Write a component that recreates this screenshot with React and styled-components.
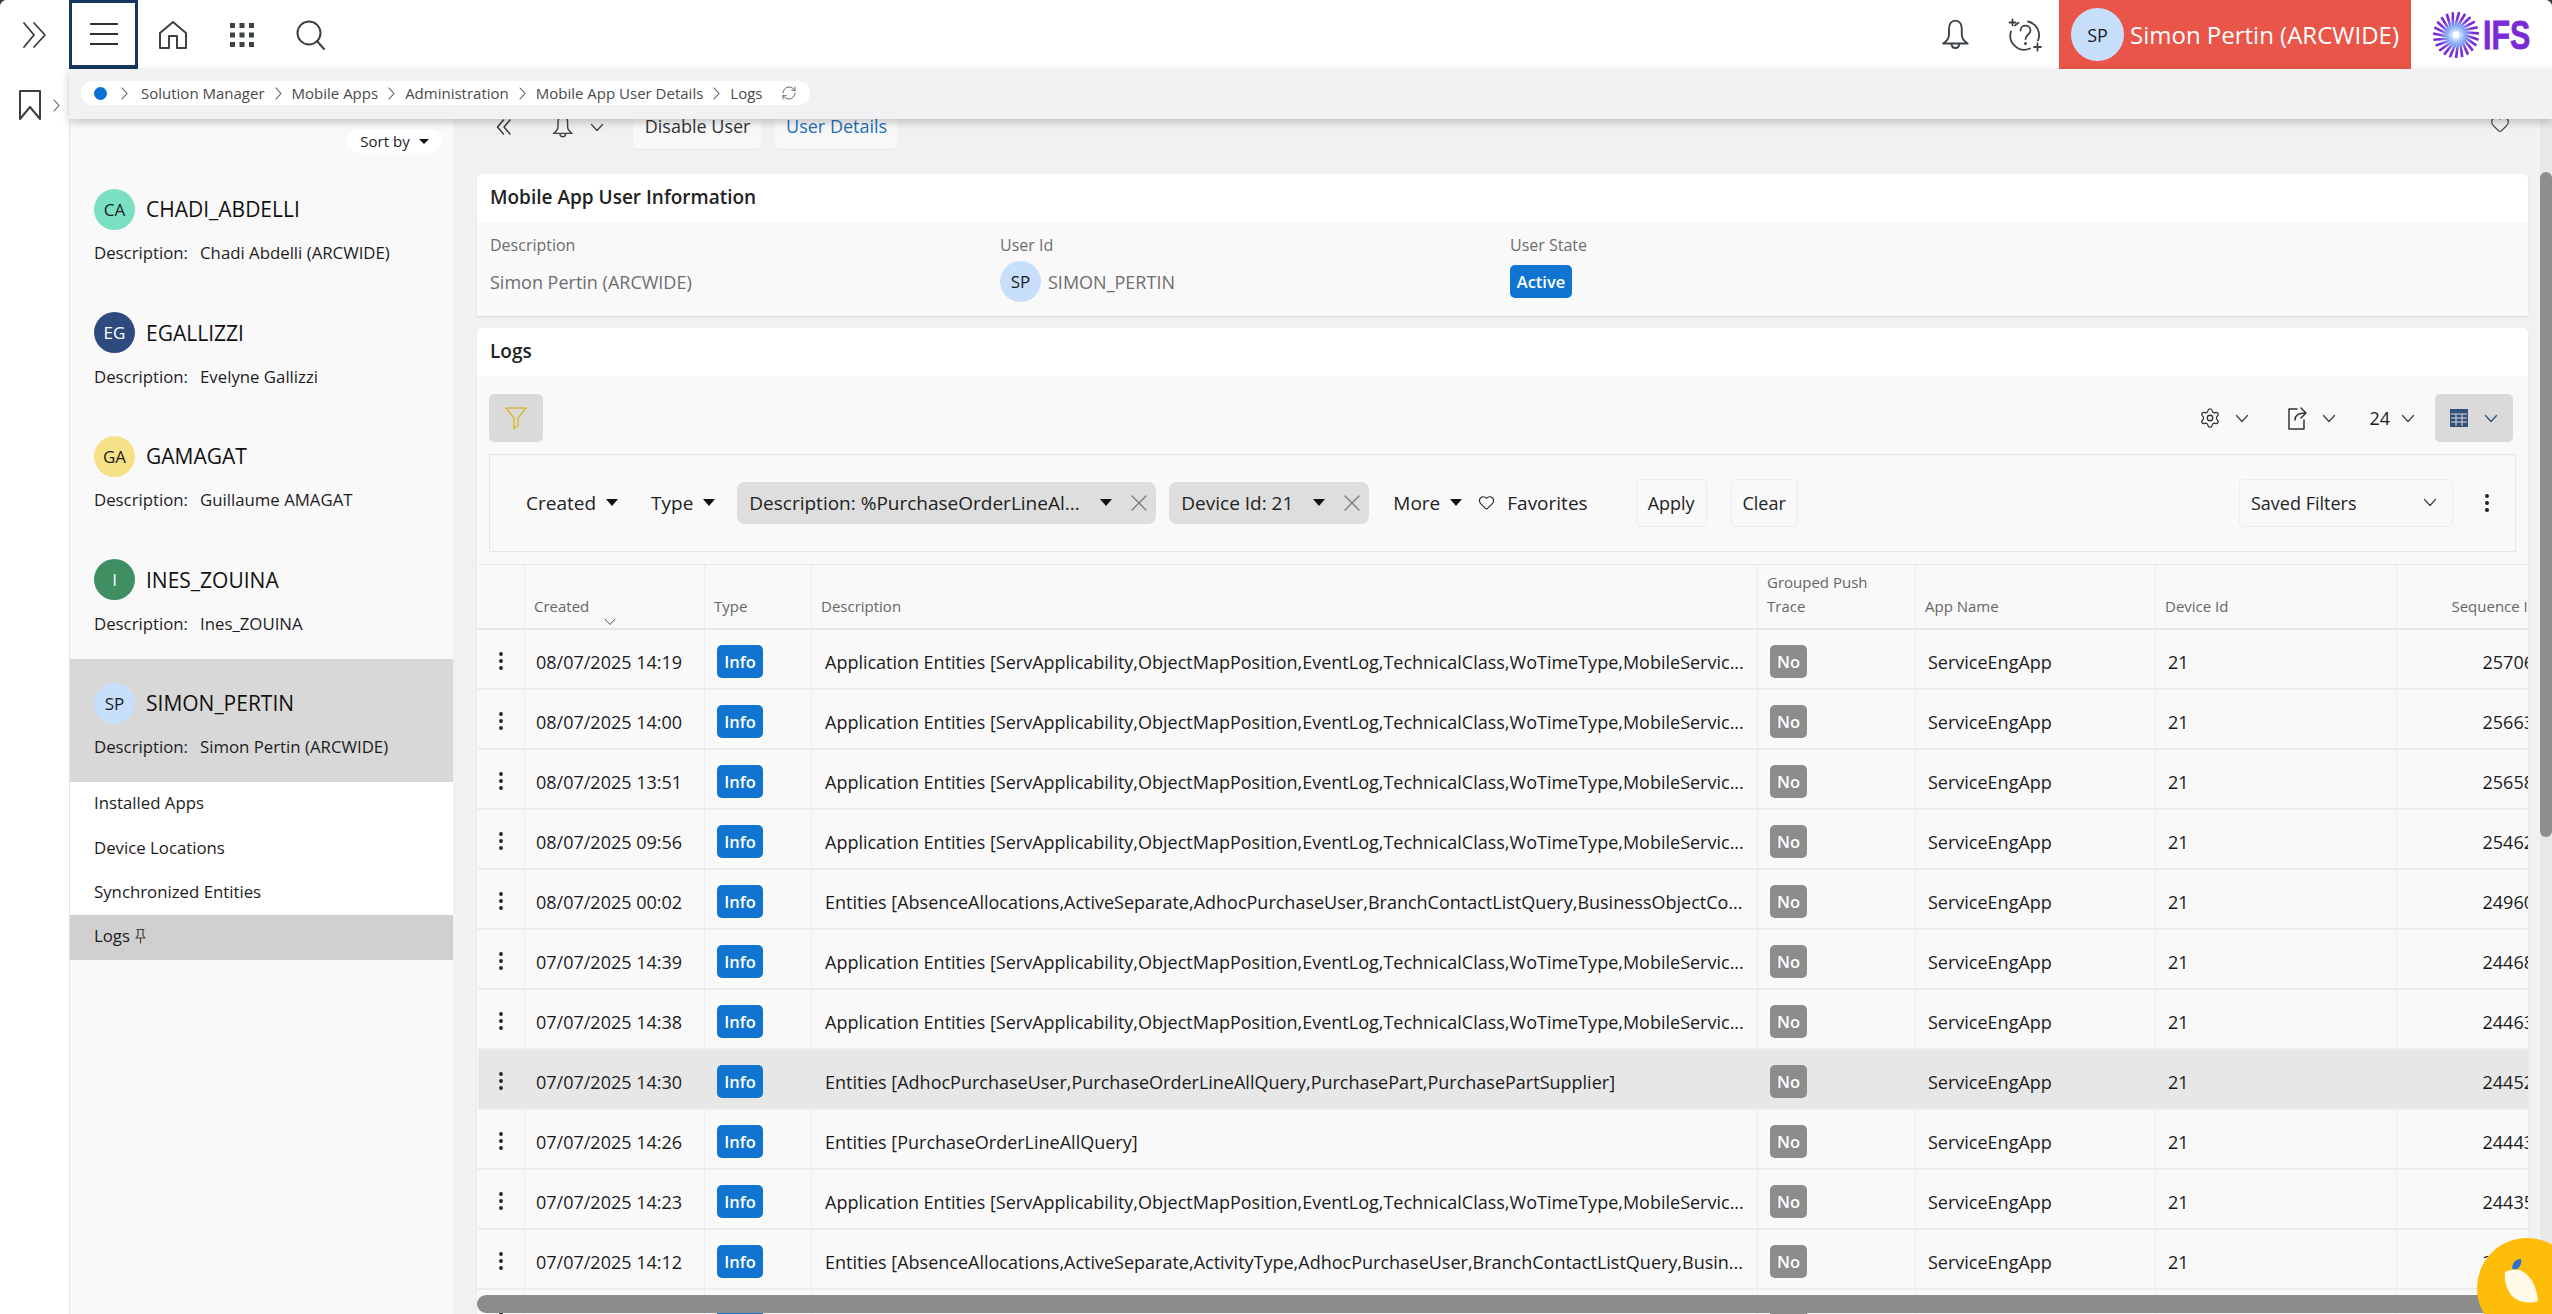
import React from 'react';
import styled, { createGlobalStyle } from 'styled-components';
import { Settings, RefreshCw, Heart } from 'lucide-react';

const GlobalStyle = createGlobalStyle`
  html, body { margin: 0; padding: 0; background: #3a3a3a; }
  body { font-family: "Open Sans", "Liberation Sans", sans-serif; color: #1c1c1c; }
  * { box-sizing: border-box; }
`;

const Page = styled.div`
  display: flex;
  width: 2552px;
  height: 1314px;
  overflow: hidden;
  position: relative;
  background: #fff;
  border-radius: 7px 7px 0 0;
`;

const Rail = styled.div`
  width: 69px;
  flex: none;
  background: #fff;
  display: flex;
  flex-direction: column;
`;

const RailTop = styled.div`
  height: 69px;
  display: flex;
  align-items: center;
  justify-content: center;
`;

const RailBookmark = styled.div`
  display: flex;
  align-items: center;
  padding: 20px 0 0 18px;
  gap: 11px;
`;

const Column = styled.div`
  flex: 1;
  min-width: 0;
  display: flex;
  flex-direction: column;
`;

const Header = styled.header`
  height: 69px;
  flex: none;
  display: flex;
  align-items: stretch;
  background: #fff;
`;

const MenuBox = styled.div`
  width: 69px;
  display: flex;
  align-items: center;
  justify-content: center;
  border: 3px solid #17375f;
  border-bottom-width: 4px;
`;

const IconSlot = styled.div`
  width: 69px;
  display: flex;
  align-items: center;
  justify-content: center;
`;

const HeaderRight = styled.div`
  margin-left: auto;
  display: flex;
  align-items: stretch;
`;

const UserBadge = styled.div`
  width: 352px;
  background: #ea5549;
  color: #fff;
  display: flex;
  align-items: center;
  padding-left: 12px;
  gap: 6px;
  font-size: 24px;
`;

const Avatar = styled.span`
  width: ${p => p.$size || 41}px;
  height: ${p => p.$size || 41}px;
  flex: none;
  border-radius: 50%;
  background: ${p => p.$bg};
  color: ${p => p.$fg || '#1c1c1c'};
  font-size: ${p => p.$font || 17}px;
  display: flex;
  align-items: center;
  justify-content: center;
`;

const LogoBox = styled.div`
  width: 141px;
  display: flex;
  align-items: center;
  padding-left: 21px;
`;

const LogoText = styled.span`
  font-family: "Liberation Sans", sans-serif;
  font-weight: 700;
  font-size: 40px;
  line-height: 1;
  color: #7a2bd6;
  display: inline-block;
  transform: scaleX(0.76);
  transform-origin: left center;
  margin-left: 3px;
  -webkit-text-stroke: 0.8px #7a2bd6;
`;

const CrumbBar = styled.div`
  height: 50px;
  flex: none;
  background: #f2f1f4;
  padding: 12px 0 0 12px;
  box-shadow: 0 3px 8px rgba(0, 0, 0, 0.22);
  position: relative;
  z-index: 3;
`;

const CrumbPill = styled.nav`
  display: flex;
  align-items: center;
  height: 24px;
  width: 729px;
  padding-left: 13px;
  border-radius: 12px;
  background: #fff;
  font-size: 15px;
  color: #4a4a4a;
  white-space: nowrap;
`;

const CrumbDot = styled.span`
  width: 13px;
  height: 13px;
  flex: none;
  border-radius: 50%;
  background: #0b6fd6;
`;

const CrumbSep = styled.span`
  display: flex;
  flex: none;
  width: ${p => p.$w || 27}px;
  justify-content: center;
`;

const Body = styled.div`
  flex: 1;
  min-height: 0;
  display: flex;
`;

const Sidebar = styled.aside`
  width: 384px;
  flex: none;
  background: #f9f9fa;
  border-left: 1px solid #e5e5e7;
  display: flex;
  flex-direction: column;
`;

const SortRow = styled.div`
  height: 45.5px;
  flex: none;
  display: flex;
  justify-content: flex-end;
  align-items: flex-start;
  padding: 10px 11px 0 0;
`;

const SortPill = styled.div`
  width: 95px;
  height: 24px;
  border-radius: 12px;
  background: #fff;
  font-size: 15px;
  display: flex;
  align-items: center;
  justify-content: center;
  gap: 9px;
`;

const UserItem = styled.div`
  height: 123.5px;
  flex: none;
  padding: 24px 0 0 24px;
  background: ${p => (p.$active ? '#d8d8d8' : 'transparent')};
`;

const UserHead = styled.div`
  display: flex;
  align-items: center;
  gap: 11px;
  font-size: 21px;
  color: #111;
`;

const UserDesc = styled.div`
  display: flex;
  margin-top: 11.5px;
  font-size: 16.8px;
  line-height: 24px;
  gap: 12px;
`;

const NavList = styled.div`
  background: #fff;
`;

const NavItem = styled.div`
  height: 44.4px;
  display: flex;
  align-items: center;
  gap: 4px;
  padding: 0 0 3px 24px;
  font-size: 16.8px;
  background: ${p => (p.$active ? '#d0d0d0' : 'transparent')};
`;

const Main = styled.main`
  flex: 1;
  min-width: 0;
  position: relative;
  background: #f1f0f3;
  padding: 0 24px;
  display: flex;
  flex-direction: column;
`;

const ActionBar = styled.div`
  height: 30px;
  flex: none;
  margin-bottom: 25px;
  display: flex;
  align-items: flex-start;
  position: relative;
  padding-left: 19px;
`;

const ActionIcon = styled.span`
  display: flex;
  align-items: center;
  height: 16px;
  margin-right: ${p => p.$right || 0}px;
`;

const ActionButton = styled.div`
  width: ${p => p.$w}px;
  height: 30px;
  margin-right: 14px;
  border-radius: 0 0 5px 5px;
  background: #f8f8f9;
  box-shadow: 0 1px 1px rgba(0, 0, 0, 0.04);
  font-size: 18px;
  line-height: 14px;
  padding-left: 2px;
  text-align: center;
  color: ${p => p.$color || '#333'};
`;

const ActionEnd = styled.span`
  margin: -5px 18px 0 auto;
`;

const Card = styled.section`
  flex: ${p => (p.$grow ? 1 : 'none')};
  min-height: 0;
  position: relative;
  overflow: hidden;
  border-radius: 5px 5px 0 0;
  margin-bottom: ${p => p.$mb || 0}px;
  background: #f9f9fa;
  box-shadow: 0 1px 2px rgba(0, 0, 0, 0.1);
`;

const CardTitle = styled.h2`
  margin: 0;
  height: 48px;
  background: #fff;
  padding-left: 13px;
  font-size: 19px;
  font-weight: 600;
  line-height: 46px;
  color: #222;
`;

const InfoGrid = styled.div`
  height: 94px;
  display: grid;
  grid-template-columns: 510px 510px 1fr;
  padding: 11px 0 0 13px;
  font-size: 18px;
  color: #6d6d6e;
`;

const InfoLabel = styled.div`
  font-size: 16px;
  line-height: 24px;
  margin-bottom: 4px;
`;

const InfoValue = styled.div`
  display: flex;
  align-items: center;
  gap: 7px;
  height: 41px;
`;

const Badge = styled.span`
  display: inline-flex;
  align-items: center;
  justify-content: center;
  width: ${p => p.$w}px;
  height: 33px;
  border-radius: 5px;
  background: ${p => p.$bg};
  color: #fff;
  font-size: 16.5px;
  font-weight: 600;
`;

const ListTools = styled.div`
  height: 78px;
  padding: 18px 15px 0 12px;
  display: flex;
  align-items: flex-start;
`;

const ToolButton = styled.div`
  width: ${p => p.$w}px;
  height: 48px;
  border-radius: 5px;
  background: #dadada;
  display: flex;
  align-items: center;
  justify-content: center;
  gap: ${p => p.$gap || 0}px;
`;

const ToolGroup = styled.div`
  margin-left: auto;
  height: 48px;
  display: flex;
  align-items: center;
`;

const ToolItem = styled.div`
  display: flex;
  align-items: center;
  gap: ${p => p.$gap || 10}px;
  margin-right: ${p => p.$mr}px;
  font-size: 18px;
`;

const FilterPanel = styled.div`
  height: 98px;
  margin: 0 12px 12px;
  border: 1px solid #e6e6e7;
  display: flex;
  align-items: center;
  padding: 0 0 1px 36px;
  font-size: 19px;
  color: #222;
`;

const FilterItem = styled.div`
  display: flex;
  align-items: center;
  gap: ${p => p.$gap || 10}px;
  margin-right: ${p => p.$mr || 0}px;
`;

const Caret = styled.span`
  width: 0;
  height: 0;
  flex: none;
  border-left: ${p => p.$s || 6.5}px solid transparent;
  border-right: ${p => p.$s || 6.5}px solid transparent;
  border-top: ${p => (p.$s || 6.5) + 0.5}px solid #111;
`;

const Chip = styled.div`
  width: ${p => p.$w}px;
  height: 42px;
  margin-right: ${p => p.$mr}px;
  border-radius: 8px;
  background: #dedede;
  padding: 0 8px 0 12px;
  display: flex;
  align-items: center;
`;

const ChipText = styled.span`
  flex: 1;
  white-space: nowrap;
`;

const PlainButton = styled.div`
  width: ${p => p.$w}px;
  height: 48px;
  margin-right: ${p => p.$mr || 0}px;
  border: 1px solid #ededee;
  border-radius: 5px;
  display: flex;
  align-items: center;
  justify-content: center;
  font-size: 18px;
`;

const SavedFilters = styled.div`
  margin-left: auto;
  width: 214px;
  height: 48px;
  border: 1px solid #ededee;
  border-radius: 5px;
  padding: 0 15px 0 11px;
  display: flex;
  align-items: center;
  justify-content: space-between;
  font-size: 18px;
`;

const Kebab = styled.span`
  display: flex;
  justify-content: center;
  margin: 0 ${p => p.$mr || 0}px 0 ${p => p.$ml || 0}px;
`;

const Table = styled.div`
  margin-left: 1px;
  border-top: 1px solid #e8e8e8;
`;

const GRID = '47px 180px 107px 946px 158px 240px 241px 148px';

const HeadRow = styled.div`
  display: grid;
  grid-template-columns: ${GRID};
  width: max-content;
  height: 65px;
  border-bottom: 2px solid #e6e6e6;
  font-size: 15px;
  color: #666;
`;

const HeadCell = styled.div`
  position: relative;
  border-right: 1px solid #ececec;
  padding: 0 ${p => (p.$right ? 7 : 9)}px 10px 9px;
  display: flex;
  flex-direction: column;
  justify-content: flex-end;
  text-align: ${p => (p.$right ? 'right' : 'left')};
  line-height: 24px;
`;

const SortMark = styled.span`
  position: absolute;
  left: 79px;
  bottom: 2px;
  display: flex;
`;

const Row = styled.div`
  display: grid;
  grid-template-columns: ${GRID};
  width: max-content;
  height: 60px;
  background: ${p => (p.$active ? '#e7e7e7' : 'transparent')};
  border-bottom: 2px solid #ececec;
  font-size: 18px;
  color: #1a1a1a;
  white-space: nowrap;
`;

const Cell = styled.div`
  display: flex;
  align-items: center;
  min-width: 0;
  border-right: 1px solid ${p => (p.$active ? 'transparent' : '#ececec')};
  padding: ${p => p.$top ?? 6}px ${p => p.$r || 9}px 0 ${p => p.$l || 11}px;
  justify-content: ${p => (p.$right ? 'flex-end' : 'flex-start')};
`;

const HScroll = styled.div`
  position: absolute;
  left: 0;
  right: 0;
  bottom: 1px;
  height: 18px;
  border-radius: 9px;
  background: #8c8c8c;
`;

const VTrack = styled.div`
  position: absolute;
  top: 0;
  right: 0;
  bottom: 0;
  width: 12px;
  background: #e8e8e9;
`;

const VThumb = styled.div`
  margin-top: 53px;
  height: 665px;
  border-radius: 6px;
  background: #8e8e90;
`;

const Fab = styled.div`
  position: absolute;
  right: -25px;
  bottom: -24px;
  width: 100px;
  height: 100px;
  border-radius: 50%;
  background: #fdbd08;
  z-index: 5;
`;

const FabIcon = styled.svg`
  display: block;
  margin: 18px 0 0 26px;
`;

const Line = ({ w = 20, h = 20, sw = 2, c = '#444', children }) => (
  <svg width={w} height={h} viewBox={`0 0 ${w} ${h}`} fill="none" stroke={c} strokeWidth={sw} strokeLinecap="round" strokeLinejoin="round">
    {children}
  </svg>
);

const Chev = ({ c = '#444' }) => (
  <Line w={14} h={9} sw={1.3} c={c}><path d="M1.5 1.5 7 7.5l5.5-6" /></Line>
);

const CrumbChev = () => (
  <Line w={7} h={13} sw={1.1} c="#555"><path d="M1 1l5 5.5L1 12" /></Line>
);

const Dots = ({ c = '#222', r = 2 }) => (
  <svg width="6" height="20" viewBox="0 0 6 20" fill={c}>
    <circle cx="3" cy="3" r={r} /><circle cx="3" cy="10" r={r} /><circle cx="3" cy="17" r={r} />
  </svg>
);

const CloseX = () => (
  <Line w={18} h={18} sw={1.3} c="#777"><path d="M2 2l14 14M16 2 2 16" /></Line>
);

const BellIcon = ({ size = 32, c = '#3c4246' }) => (
  <svg width={size * 0.9} height={size} viewBox="0 0 27 30" fill="none" stroke={c} strokeWidth="1.8" strokeLinejoin="round">
    <path d="M13.5 1.5c-4 0-6 3.4-6 8v5c0 4-2.5 6.5-5.5 8.5h23c-3-2-5.5-4.5-5.5-8.5v-5c0-4.6-2-8-6-8z" />
    <path d="M10 23.5c0 5 7 5 7 0" />
  </svg>
);

const IfsMark = () => {
  const rays = Array.from({ length: 23 }, (_, i) => {
    const a = (i / 23) * Math.PI * 2;
    const b = a + 0.75;
    return {
      x1: 24 + Math.cos(a) * 4,
      y1: 24 + Math.sin(a) * 4,
      x2: 24 + Math.cos(b) * 23,
      y2: 24 + Math.sin(b) * 23,
    };
  });
  return (
    <svg width="48" height="48" viewBox="0 0 48 48">
      <defs>
        <radialGradient id="ifsRay" gradientUnits="userSpaceOnUse" cx="24" cy="24" r="23">
          <stop offset="0.1" stopColor="#dff3ff" />
          <stop offset="0.45" stopColor="#7d9cf0" />
          <stop offset="0.75" stopColor="#7a2bd6" />
          <stop offset="1" stopColor="#7a2bd6" />
        </radialGradient>
      </defs>
      {rays.map((r, i) => (
        <line key={i} {...r} stroke="url(#ifsRay)" strokeWidth="2.6" strokeLinecap="butt" />
      ))}
    </svg>
  );
};

const users = [
  { id: 'CHADI_ABDELLI', desc: 'Chadi Abdelli (ARCWIDE)', ini: 'CA', bg: '#7be0c3' },
  { id: 'EGALLIZZI', desc: 'Evelyne Gallizzi', ini: 'EG', bg: '#2f4a7f', fg: '#fff' },
  { id: 'GAMAGAT', desc: 'Guillaume AMAGAT', ini: 'GA', bg: '#f5e287' },
  { id: 'INES_ZOUINA', desc: 'Ines_ZOUINA', ini: 'I', bg: '#3f8f63', fg: '#fff' },
  { id: 'SIMON_PERTIN', desc: 'Simon Pertin (ARCWIDE)', ini: 'SP', bg: '#c7dffb', active: true },
];

const APP = 'Application Entities [ServApplicability,ObjectMapPosition,EventLog,TechnicalClass,WoTimeType,MobileServic...';
const BRANCH = 'Entities [AbsenceAllocations,ActiveSeparate,AdhocPurchaseUser,BranchContactListQuery,BusinessObjectCo...';
const ACTIVITY = 'Entities [AbsenceAllocations,ActiveSeparate,ActivityType,AdhocPurchaseUser,BranchContactListQuery,Busin...';

const rows = [
  ['08/07/2025 14:19', APP, '25706'],
  ['08/07/2025 14:00', APP, '25663'],
  ['08/07/2025 13:51', APP, '25658'],
  ['08/07/2025 09:56', APP, '25462'],
  ['08/07/2025 00:02', BRANCH, '24960'],
  ['07/07/2025 14:39', APP, '24468'],
  ['07/07/2025 14:38', APP, '24463'],
  ['07/07/2025 14:30', 'Entities [AdhocPurchaseUser,PurchaseOrderLineAllQuery,PurchasePart,PurchasePartSupplier]', '24452'],
  ['07/07/2025 14:26', 'Entities [PurchaseOrderLineAllQuery]', '24443'],
  ['07/07/2025 14:23', APP, '24435'],
  ['07/07/2025 14:12', ACTIVITY, '24429'],
  ['07/07/2025 14:05', APP, '24421'],
];

const crumbs = ['Solution Manager', 'Mobile Apps', 'Administration', 'Mobile App User Details', 'Logs'];

export default function App() {
  return (
    <Page>
      <GlobalStyle />
      <Rail>
        <RailTop>
          <Line w={26} h={28} sw={1.8} c="#3b4044"><path d="M2 2l10 12L2 26M12 2l11 12-11 12" /></Line>
        </RailTop>
        <RailBookmark>
          <Line w={24} h={32} sw={2} c="#3b4044"><path d="M2 2h20v28L12 18 2 30z" /></Line>
          <Line w={7} h={13} sw={1.1} c="#555"><path d="M1 1l5 5.5L1 12" /></Line>
        </RailBookmark>
      </Rail>
      <Column>
        <Header>
          <MenuBox>
            <Line w={28} h={24} sw={2.2} c="#2d3236"><path d="M0 2h28M0 12h28M0 22h28" /></Line>
          </MenuBox>
          <IconSlot>
            <Line w={30} h={30} sw={2} c="#3c4246"><path d="M2 13 15 2l13 11v15H19V16h-8v12H2z" /></Line>
          </IconSlot>
          <IconSlot>
            <svg width="24" height="24" viewBox="0 0 24 24" fill="#3c4246">
              {[0, 9.5, 19].flatMap(y => [0, 9.5, 19].map(x => <rect key={`${x}-${y}`} x={x} y={y} width="5" height="5" />))}
            </svg>
          </IconSlot>
          <IconSlot>
            <Line w={30} h={30} sw={2} c="#3c4246"><circle cx="13" cy="13" r="11.5" /><path d="M21 21l7 8" /></Line>
          </IconSlot>
          <HeaderRight>
            <IconSlot><BellIcon /></IconSlot>
            <IconSlot>
              <Line w={34} h={34} sw={1.8} c="#3c4246">
                <path d="M20 3.5a14 14 0 0 1 10 19M22 30.5a14 14 0 0 1-19-17M7 7.5a14 14 0 0 1 3.5-2.8" />
                <path d="M12.5 12.5c0-6.5 10-6.5 10 0 0 4-5 4-5 8.5" />
                <circle cx="17.5" cy="25.5" r="0.6" />
                <path d="M1.5 4.5h6M4.5 1.5v6M26 29h7M29.5 25.5v7" />
              </Line>
            </IconSlot>
            <UserBadge>
              <Avatar $bg="#c7dffb" $size={53} $font={18}>SP</Avatar>
              Simon Pertin (ARCWIDE)
            </UserBadge>
            <LogoBox>
              <IfsMark />
              <LogoText>IFS</LogoText>
            </LogoBox>
          </HeaderRight>
        </Header>
        <CrumbBar>
          <CrumbPill>
            <CrumbDot />
            {crumbs.map((c, i) => (
              <React.Fragment key={c}>
                <CrumbSep $w={i === 0 ? 34 : 27}><CrumbChev /></CrumbSep>
                {c}
              </React.Fragment>
            ))}
            <CrumbSep $w={52}><RefreshCw size={16} strokeWidth={1.3} color="#555" /></CrumbSep>
          </CrumbPill>
        </CrumbBar>
        <Body>
          <Sidebar>
            <SortRow>
              <SortPill>Sort by <Caret $s={5} /></SortPill>
            </SortRow>
            {users.map(u => (
              <UserItem key={u.id} $active={u.active}>
                <UserHead>
                  <Avatar $bg={u.bg} $fg={u.fg}>{u.ini}</Avatar>
                  {u.id}
                </UserHead>
                <UserDesc>
                  <span>Description:</span>
                  <span>{u.desc}</span>
                </UserDesc>
              </UserItem>
            ))}
            <NavList>
              <NavItem>Installed Apps</NavItem>
              <NavItem>Device Locations</NavItem>
              <NavItem>Synchronized Entities</NavItem>
              <NavItem $active>
                Logs
                <Line w={13} h={16} sw={1.2} c="#444"><path d="M3 1.5h7M4 1.5v6L2 10h9L9 7.5v-6M6.5 10v5" /></Line>
              </NavItem>
            </NavList>
          </Sidebar>
          <Main>
            <ActionBar>
              <ActionIcon $right={40}>
                <Line w={16} h={16} sw={1.4} c="#333"><path d="M7.5 1 1.5 8l6 7M14 1 8 8l6 7" /></Line>
              </ActionIcon>
              <ActionIcon $right={16}><BellIcon size={24} c="#444" /></ActionIcon>
              <ActionIcon $right={29}><Chev /></ActionIcon>
              <ActionButton $w={128}>Disable User</ActionButton>
              <ActionButton $w={122} $color="#1e6fb8">User Details</ActionButton>
              <ActionEnd><Heart size={20} strokeWidth={1.4} color="#444" /></ActionEnd>
            </ActionBar>

            <Card $mb={12}>
              <CardTitle>Mobile App User Information</CardTitle>
              <InfoGrid>
                <div>
                  <InfoLabel>Description</InfoLabel>
                  <InfoValue>Simon Pertin (ARCWIDE)</InfoValue>
                </div>
                <div>
                  <InfoLabel>User Id</InfoLabel>
                  <InfoValue><Avatar $bg="#c7dffb">SP</Avatar>SIMON_PERTIN</InfoValue>
                </div>
                <div>
                  <InfoLabel>User State</InfoLabel>
                  <InfoValue><Badge $w={62} $bg="#0f75d1">Active</Badge></InfoValue>
                </div>
              </InfoGrid>
            </Card>

            <Card $grow>
              <CardTitle>Logs</CardTitle>
              <ListTools>
                <ToolButton $w={54}>
                  <svg width="24" height="24" viewBox="0 0 24 24" fill="none" stroke="#d9b93a" strokeWidth="1.5" strokeLinejoin="round">
                    <path d="M2 2h20l-8 10v8l-4 3V12z" />
                  </svg>
                </ToolButton>
                <ToolGroup>
                  <ToolItem $mr={38} $gap={14}><Settings size={22} strokeWidth={1.4} color="#333" /><Chev /></ToolItem>
                  <ToolItem $mr={33} $gap={15}>
                    <Line w={20} h={24} sw={1.5} c="#333"><path d="M10 3H2v20h15v-9M8 14c0-5 3-7 10-7M14 2l5 5-5 5" /></Line>
                    <Chev />
                  </ToolItem>
                  <ToolItem $mr={20} $gap={11}>24<Chev /></ToolItem>
                  <ToolButton $w={78} $gap={16}>
                    <svg width="18" height="18" viewBox="0 0 18 18">
                      <rect width="18" height="18" fill="#33507f" />
                      <path d="M1 5h16M1 9h16M1 13h16M6 5v12M12 5v12" stroke="#dadada" strokeWidth="1" />
                    </svg>
                    <Chev c="#33507f" />
                  </ToolButton>
                </ToolGroup>
              </ListTools>

              <FilterPanel>
                <FilterItem $mr={33}>Created<Caret /></FilterItem>
                <FilterItem $mr={22}>Type<Caret /></FilterItem>
                <Chip $w={419} $mr={13}>
                  <ChipText>Description: %PurchaseOrderLineAl...</ChipText>
                  <Caret />
                  <Kebab $ml={18}><CloseX /></Kebab>
                </Chip>
                <Chip $w={200} $mr={24}>
                  <ChipText>Device Id: 21</ChipText>
                  <Caret />
                  <Kebab $ml={18}><CloseX /></Kebab>
                </Chip>
                <FilterItem $mr={16}>More<Caret /></FilterItem>
                <FilterItem $mr={48} $gap={12}><Heart size={17} strokeWidth={1.5} color="#222" />Favorites</FilterItem>
                <PlainButton $w={71} $mr={24}>Apply</PlainButton>
                <PlainButton $w={67}>Clear</PlainButton>
                <SavedFilters>Saved Filters<Chev /></SavedFilters>
                <Kebab $ml={31} $mr={25}><Dots /></Kebab>
              </FilterPanel>

              <Table>
                <HeadRow>
                  <HeadCell />
                  <HeadCell>Created<SortMark><Line w={12} h={8} sw={1} c="#555"><path d="M1 1l5 5.5L11 1" /></Line></SortMark></HeadCell>
                  <HeadCell>Type</HeadCell>
                  <HeadCell>Description</HeadCell>
                  <HeadCell><span>Grouped Push</span><span>Trace</span></HeadCell>
                  <HeadCell>App Name</HeadCell>
                  <HeadCell>Device Id</HeadCell>
                  <HeadCell $right>Sequence Id</HeadCell>
                </HeadRow>
                {rows.map(([date, text, seq], i) => {
                  const active = i === 7;
                  return (
                    <Row key={date} $active={active}>
                      <Cell $active={active} $l={20} $top={4}><Dots r={1.9} /></Cell>
                      <Cell $active={active}>{date}</Cell>
                      <Cell $active={active} $l={12} $top={5}><Badge $w={46} $bg="#0f75d1">Info</Badge></Cell>
                      <Cell $active={active} $l={13} $r={8}>{text}</Cell>
                      <Cell $active={active} $l={12} $top={5}><Badge $w={37} $bg="#8c8c8c">No</Badge></Cell>
                      <Cell $active={active} $l={12}>ServiceEngApp</Cell>
                      <Cell $active={active} $l={12}>21</Cell>
                      <Cell $active={active} $right $r={10}>{seq}</Cell>
                    </Row>
                  );
                })}
              </Table>
              <HScroll />
            </Card>
            <VTrack><VThumb /></VTrack>
          </Main>
        </Body>
      </Column>
      <Fab>
        <FabIcon width="40" height="48" viewBox="0 0 40 48">
          <path d="M9 12c1-7 5-9 9-9 1 4-1 10-7 11z" fill="#2f6fd6" />
          <path d="M2 16c6-3 14-4 20 1 8 6 12 16 13 28-8 3-20 2-27-6C3 32 1 24 2 16z" fill="#fff9e8" />
        </FabIcon>
      </Fab>
    </Page>
  );
}
